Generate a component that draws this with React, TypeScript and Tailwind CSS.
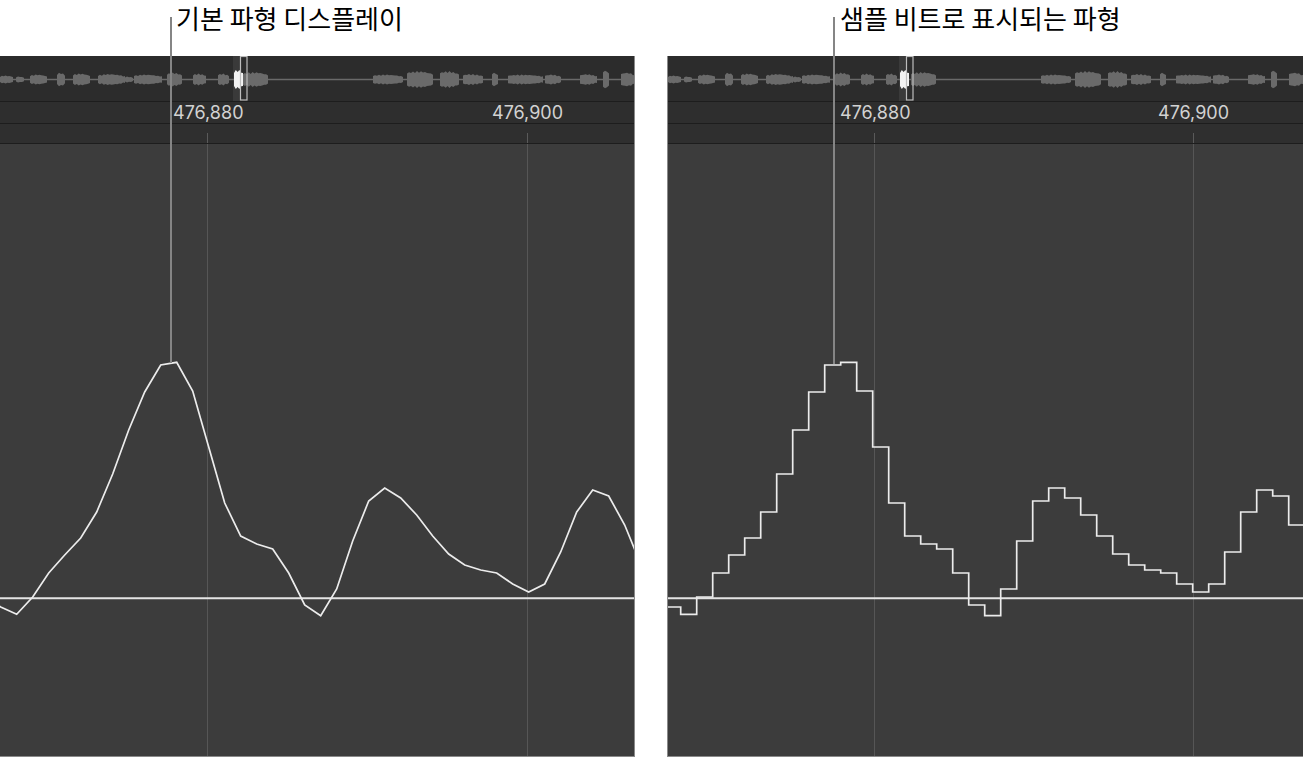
// Two side-by-side sample editor views: the plain line waveform and the sample-and-hold steps.

const FONT_KR = { fontFamily: '"Noto Sans CJK KR", "Noto Sans", sans-serif' }
const FONT_UI = { fontFamily: 'Inter, "Noto Sans", sans-serif' }

// page y of each sample, 16px apart
const samples = [
  607, 614.3, 597, 573, 555, 538, 512, 474, 430, 392, 365, 362.3, 391, 447, 503, 536, 544, 549, 573, 605,
  615.7, 589, 541, 501, 488, 498, 515, 536, 554, 565, 570, 573, 584, 592, 584, 552, 512, 490, 496, 525, 564,
]
const MAIN_TOP = 144
const ZERO_Y = 598.3 - MAIN_TOP

// overview regions: [x, width, peak height]
const blobs: [number, number, number][] = [
  [0, 13, 8], [16, 8, 6], [30, 17, 10], [57, 8, 14], [73, 17, 12], [98, 27, 11], [125, 8, 6],
  [134, 28, 10], [167, 15, 14], [193, 13, 12], [218, 11, 12], [243, 25, 15], [373, 30, 10],
  [407, 26, 17], [440, 19, 17], [463, 20, 11], [492, 6, 14], [508, 35, 10], [545, 16, 10],
  [580, 17, 11], [603, 6, 19], [621, 14, 14],
]

// jagged envelope for one overview region
function blobPath(x: number, w: number, h: number, seed: number) {
  const steps = Math.max(3, Math.round(w / 2))
  const top: string[] = []
  const bot: string[] = []
  for (let i = 0; i <= steps; i++) {
    const t = i / steps
    const env = Math.sin(Math.PI * Math.min(1, 0.15 + t * 0.85)) * 0.35 + 0.65
    const wob = 0.75 + 0.25 * Math.abs(Math.sin(seed * 3.1 + i * 1.7))
    const half = Math.max(1.5, (h / 2) * env * wob)
    const px = x + t * w
    top.push(`${px.toFixed(1)} ${(23.5 - half).toFixed(1)}`)
    bot.unshift(`${px.toFixed(1)} ${(23.5 + half).toFixed(1)}`)
  }
  return `M ${top.join(' L ')} L ${bot.join(' L ')} Z`
}

function Overview({ boxX }: { boxX: number }) {
  return (
    <svg width="100%" height="45" className="block">
      <rect x={boxX - 7} y={0} width={7} height={45} fill="#3a3a3a" />
      <line x1={0} y1={23.5} x2={640} y2={23.5} stroke="#6a6a6a" strokeWidth={1.5} />
      {blobs.map(([x, w, h], i) => (
        <path key={i} d={blobPath(x, w, h, i + 1)} fill="#6a6a6a" />
      ))}
      <path d={blobPath(boxX - 6, 9, 20, 7)} fill="#f2f2f2" />
      <rect x={boxX + 0.5} y={0.5} width={6.5} height={43.5} fill="none" stroke="#bdbdbd" strokeWidth={1.2} />
    </svg>
  )
}

function Ruler({ labels }: { labels: [number, string][] }) {
  return (
    <div className="relative h-[22px] bg-[#2e2e2e] border-b border-[#1d1d1d]">
      {labels.map(([x, t]) => (
        <span
          key={t}
          className="absolute top-0 text-[18px] leading-[21px] text-[#d2d2d2]"
          style={{ ...FONT_UI, left: x }}
        >
          {t}
        </span>
      ))}
    </div>
  )
}

function Panel({ label, labelLeft, stepped, grid, border }: {
  label: string
  labelLeft: number
  stepped: boolean
  grid: number[]
  border: string
}) {
  const pts = samples.map((y, k) => [0.7 + 16 * k, y - MAIN_TOP])

  let d = ''
  if (stepped) {
    d = `M -4 ${pts[0][1]}`
    pts.forEach(([x, y], k) => {
      if (k > 0) d += ` V ${y}`
      d += ` H ${x + 12}`
    })
  } else {
    d = `M -1 ${pts[0][1] - 1} ` + pts.map(([x, y]) => `L ${x} ${y}`).join(' ')
  }

  return (
    <div className="flex flex-col h-full">
      <div className="h-[56px] text-[26px] leading-[36px] text-black" style={{ ...FONT_KR, paddingLeft: labelLeft }}>
        {label}
      </div>
      <div className={`flex-1 flex flex-col bg-[#3c3c3c] border-b border-[#8a8a8a] ${border}`}>
        <div className="h-[46px] bg-[#2c2c2c] border-b border-[#1d1d1d]">
          <Overview boxX={stepped ? 238 : 240} />
        </div>
        <Ruler labels={[[grid[0] - 34, '476,880'], [grid[1] - 35, '476,900']]} />
        <div className="h-[20px] bg-[#2f2f2f] border-b border-[#1d1d1d]">
          <svg width="100%" height="19" className="block">
            {grid.map((x) => (
              <line key={x} x1={x + 0.5} y1={9} x2={x + 0.5} y2={19} stroke="#5a5a5a" strokeWidth={1} />
            ))}
          </svg>
        </div>
        <div className="flex-1">
          <svg width="100%" height="612" className="block">
            {grid.map((x) => (
              <line key={x} x1={x + 0.5} y1={0} x2={x + 0.5} y2={612} stroke="#565656" strokeWidth={1} />
            ))}
            <line x1={0} y1={ZERO_Y} x2={640} y2={ZERO_Y} stroke="#e4e4e4" strokeWidth={2} />
            <path d={d} fill="none" stroke="#ececec" strokeWidth={1.7} strokeLinejoin="miter" />
          </svg>
        </div>
      </div>
    </div>
  )
}

export default function App() {
  return (
    <div className="relative w-[1303px] h-[758px] bg-white overflow-hidden flex items-start gap-[32px]">
      <div className="w-[635px] h-[757px]">
        <Panel label="기본 파형 디스플레이" labelLeft={176} stepped={false} grid={[207, 527]} border="border-r" />
      </div>
      <div className="w-[636px] h-[757px]">
        <Panel label="샘플 비트로 표시되는 파형" labelLeft={173} stepped grid={[206, 525]} border="border-l" />
      </div>

      {/* callout leaders */}
      <div className="absolute left-[170px] top-[17px] w-[2px] h-[346px] bg-[#858585]" />
      <div className="absolute left-[833px] top-[17px] w-[2px] h-[347px] bg-[#858585]" />
    </div>
  )
}
